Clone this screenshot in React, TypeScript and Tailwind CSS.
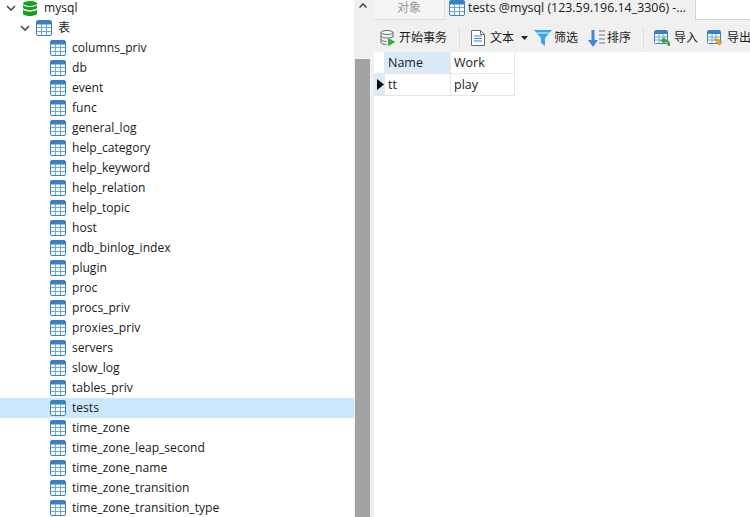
import React from 'react';

const FONT = { fontFamily: '"Open Sans", "Noto Sans CJK SC", sans-serif' };

function TableIcon() {
  return (
    <svg width="16" height="16" viewBox="0 0 16 16" className="shrink-0">
      <rect x="0.5" y="0.5" width="15" height="15" rx="1.5" fill="#fff" stroke="#3a80c2" />
      <path d="M1 1h14v3.500H1z" fill="#3a80c2" />
      <path d="M5.500 4v11M10.500 4v11M1 7.500h14M1 11.500h14" stroke="#6aa7dc" fill="none" />
    </svg>
  );
}

function DbIcon() {
  return (
    <svg width="14" height="15" viewBox="0 0 14 15" className="shrink-0">
      <ellipse cx="7" cy="2.500" rx="7" ry="2.500" fill="#16a01e" />
      <path d="M0 3.500v3c0 1.400 3.100 2.500 7 2.500s7-1.100 7-2.500v-3c0 1.400-3.100 2.500-7 2.500S0 4.900 0 3.500z" fill="#16a01e" />
      <path d="M0 8v4.500C0 13.900 3.100 15 7 15s7-1.100 7-2.500V8c0 1.400-3.100 2.500-7 2.500S0 9.400 0 8z" fill="#16a01e" />
    </svg>
  );
}

function Chevron() {
  return (
    <svg width="10" height="10" viewBox="0 0 10 10" className="shrink-0">
      <path d="M1 3l4 4 4-4" fill="none" stroke="#4d4d4d" strokeWidth="1.600" />
    </svg>
  );
}

const tables = ['columns_priv','db','event','func','general_log','help_category','help_keyword','help_relation','help_topic','host','ndb_binlog_index','plugin','proc','procs_priv','proxies_priv','servers','slow_log','tables_priv','tests','time_zone','time_zone_leap_second','time_zone_name','time_zone_transition','time_zone_transition_type'];

function TableRow({ name }: { name: string }) {
  const selected = name === 'tests';
  return (
    <div className={`flex h-5 items-center pl-[50px] ${selected ? 'bg-[#cce8ff]' : ''}`}>
      <TableIcon />
      <span className="ml-[6px] text-[12.1px] text-[#1a1a1a]">{name}</span>
    </div>
  );
}

function SmallTable() {
  return (
    <>
      <rect x=".5" y=".5" width="13" height="13" rx="1" fill="#fff" stroke="#3a80c2" />
      <path d="M1 1h12v3H1z" fill="#3a80c2" />
      <path d="M5 4v9M9 4v9M1 7h12M1 10h12" stroke="#6aa7dc" />
    </>
  );
}

export default function App() {
  return (
    <div className="flex h-[517px] w-[750px] overflow-hidden bg-white" style={FONT}>
      <div className="w-[354px] shrink-0 overflow-hidden">
        <div className="h-[18px]">
          <div className="flex h-4 items-center pl-[6px]">
            <Chevron />
            <span className="ml-[7px] flex"><DbIcon /></span>
            <span className="ml-[7px] text-[12.1px] text-[#1a1a1a]">mysql</span>
          </div>
        </div>
        <div className="flex h-5 items-center pl-[20px]">
          <Chevron />
          <span className="ml-[6px] flex"><TableIcon /></span>
          <span className="ml-[6px] text-[12px] text-[#1a1a1a]">表</span>
        </div>
        {tables.map((t) => <TableRow key={t} name={t} />)}
      </div>
      <div className="flex w-[20px] shrink-0 flex-col bg-[#f0f0f0] pl-px">
        <div className="flex h-[59px] w-[15px] justify-center pt-[3px]">
          <svg width="8" height="5" viewBox="0 0 8 5"><path d="M.5 4.500L4 1l3.500 3.500" fill="none" stroke="#444" strokeWidth="1.500" /></svg>
        </div>
        <div className="w-[15px] flex-1 bg-[#a3a3a3]" />
      </div>
      <div className="min-w-0 flex-1 overflow-hidden">
        <div className="flex h-5 items-stretch bg-[#f0f0f0]">
          <div className="flex w-[71px] items-center justify-center border-r border-b border-[#dcdcdc] bg-[#f5f5f5] pb-[3px] text-[12px] text-[#999]">对象</div>
          <div className="flex w-[250px] items-center pb-[4px] pl-[4px]">
            <TableIcon />
            <span className="ml-[3px] whitespace-nowrap text-[12.4px] text-[#1a1a1a]">tests @mysql (123.59.196.14_3306) -...</span>
          </div>
          <div className="flex-1 border-b border-l border-[#d4d4d4] bg-white" />
        </div>
        <div className="flex h-[32px] items-center overflow-hidden bg-[#f0f0f0] pt-1 pl-[6px] text-[12px] whitespace-nowrap text-[#1a1a1a]">
          <svg width="16" height="16" viewBox="0 0 16 16" className="shrink-0">
            <ellipse cx="7" cy="2.500" rx="6" ry="2" fill="#f4f4f4" stroke="#6b6b6b" />
            <path d="M1 2.500v10c0 1.100 2.400 2 5.500 2M13 2.500v5M1 6c0 1.100 2.700 2 6 2s6-.9 6-2M1 9.500c0 1.100 2.400 2 5.500 2" fill="none" stroke="#6b6b6b" />
            <path d="M8 8l7.500 4L8 16z" fill="#35ad3a" />
          </svg>
          <span className="ml-[3px]">开始事务</span>
          <div className="ml-3 h-[22px] w-px shrink-0 bg-[#dcdcdc]" />
          <svg width="14" height="16" viewBox="0 0 14 16" className="ml-[11px] shrink-0">
            <path d="M.5.500h9l4 4v11H.5z" fill="#fff" stroke="#6b6b6b" />
            <path d="M9.500.5v4h4" fill="none" stroke="#6b6b6b" />
            <path d="M3 6h8M3 8.500h8M3 11h8" stroke="#3a8ad6" />
          </svg>
          <span className="ml-[5px]">文本</span>
          <svg width="7" height="4" viewBox="0 0 7 4" className="ml-[7px] shrink-0"><path d="M0 0h7L3.500 4z" fill="#222" /></svg>
          <svg width="18" height="16" viewBox="0 0 18 16" className="ml-[6px] shrink-0">
            <path d="M0 0h18l-7 8v8l-4-3V8z" fill="#3aa5e6" />
            <path d="M1.800 2h14.400L14.500 4h-11z" fill="#8fd0f5" />
          </svg>
          <span className="ml-[2px]">筛选</span>
          <svg width="18" height="17" viewBox="0 0 18 17" className="ml-[9px] shrink-0">
            <path d="M6 0v11" stroke="#3a8ad6" strokeWidth="3" />
            <path d="M1 10h10l-5 7z" fill="#3a8ad6" />
            <path d="M12 1h6M12 5h6M12 9h6M12 13h6" stroke="#777" />
          </svg>
          <span className="ml-[2px]">排序</span>
          <div className="ml-3 h-[22px] w-px shrink-0 bg-[#dcdcdc]" />
          <svg width="16" height="16" viewBox="0 0 16 16" className="ml-[10px] shrink-0">
            <SmallTable />
            <path d="M15 16c0-4-2-5.500-5-5.500" fill="none" stroke="#4a9b46" strokeWidth="2.500" />
            <path d="M11 7l-5 3.500 5 3.500z" fill="#4a9b46" />
          </svg>
          <span className="ml-1">导入</span>
          <svg width="16" height="16" viewBox="0 0 16 16" className="ml-[9px] shrink-0">
            <SmallTable />
            <path d="M7 9.500c4 0 5.500 1 5.500 3" fill="none" stroke="#ef9a1d" strokeWidth="2.500" />
            <path d="M9 11.500h7L12.500 16z" fill="#ef9a1d" />
          </svg>
          <span className="ml-1">导出</span>
        </div>
        <div className="grid w-[141px] grid-cols-[11px_66px_64px] text-[12.5px] text-[#1a1a1a]">
          <div className="h-[22px] border-r border-b border-[#e6e6e6]" />
          <div className="flex h-[22px] items-center border-r border-b border-[#e6e6e6] bg-[#d9eaf8] pt-px pl-[3px]">Name</div>
          <div className="flex h-[22px] items-center border-r border-b border-[#e6e6e6] pt-px pl-[3px]">Work</div>
          <div className="flex h-[22px] items-center border-r border-b border-[#e6e6e6] bg-[#d9eaf8] pl-[3px]">
            <svg width="7" height="11" viewBox="0 0 7 11" className="shrink-0"><path d="M0 0l7 5.500L0 11z" fill="#000" /></svg>
          </div>
          <div className="flex h-[22px] items-center border-r border-b border-[#e6e6e6] pt-px pl-[3px]">tt</div>
          <div className="flex h-[22px] items-center border-r border-b border-[#e6e6e6] pt-px pl-[3px]">play</div>
        </div>
      </div>
    </div>
  );
}
